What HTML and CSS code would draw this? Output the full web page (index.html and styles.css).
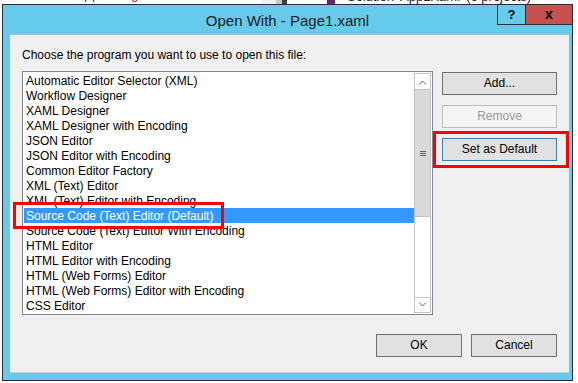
FILE: index.html
```html
<!DOCTYPE html>
<html>
<head>
<meta charset="utf-8">
<link rel="stylesheet" href="styles.css">
</head>
<body>
<div class="bg-strip">
  <span class="bg-code"><span class="r">x:Class="App1.Page1"</span> <span class="b">mc:d</span></span>
  <span class="bg-scroll"><span class="g1"></span><span class="g2"></span><span class="g3"></span></span>
  <span class="bg-icon"></span>
  <span class="bg-sol">Solution 'App1Xaml' (6 projects)</span>
</div>
<div class="window">
  <div class="titlebar">
    <div class="title">Open With - Page1.xaml</div>
    <div class="cap-btn help">?</div>
    <div class="cap-btn close">x</div>
  </div>
  <div class="client">
    <div class="label">Choose the program you want to use to open this file:</div>
    <div class="main">
      <div class="listbox">
        <ul class="items">
          <li class="item">Automatic Editor Selector (XML)</li>
          <li class="item">Workflow Designer</li>
          <li class="item">XAML Designer</li>
          <li class="item">XAML Designer with Encoding</li>
          <li class="item">JSON Editor</li>
          <li class="item">JSON Editor with Encoding</li>
          <li class="item">Common Editor Factory</li>
          <li class="item">XML (Text) Editor</li>
          <li class="item">XML (Text) Editor with Encoding</li>
          <li class="item selected">Source Code (Text) Editor (Default)</li>
          <li class="item">Source Code (Text) Editor With Encoding</li>
          <li class="item">HTML Editor</li>
          <li class="item">HTML Editor with Encoding</li>
          <li class="item">HTML (Web Forms) Editor</li>
          <li class="item">HTML (Web Forms) Editor with Encoding</li>
          <li class="item">CSS Editor</li>
        </ul>
        <div class="scrollbar">
          <div class="sb-btn sb-up">
            <svg width="15" height="15" viewBox="0 0 15 15"><polyline points="4,10.5 7.5,7 11,10.5" fill="none" stroke="#606060" stroke-width="1"/></svg>
          </div>
          <div class="sb-thumb">
            <span class="grip"></span><span class="grip"></span><span class="grip"></span>
          </div>
          <div class="sb-track"></div>
          <div class="sb-btn sb-down">
            <svg width="15" height="14" viewBox="0 0 15 14"><polyline points="4,4.5 7.5,8 11,4.5" fill="none" stroke="#606060" stroke-width="1"/></svg>
          </div>
        </div>
      </div>
      <div class="side">
        <div class="btn btn-dark">Add...</div>
        <div class="btn btn-disabled">Remove</div>
        <div class="btn btn-default">Set as Default</div>
      </div>
    </div>
    <div class="footer">
      <div class="btn btn-dark btn-small">OK</div>
      <div class="btn btn-dark btn-small">Cancel</div>
    </div>
  </div>
  <div class="mark mark-item"></div>
  <div class="mark mark-default"></div>
</div>
</body>
</html>
```
FILE: styles.css
```css
* { box-sizing: border-box; }
html, body { margin: 0; padding: 0; }
body {
  width: 578px;
  height: 383px;
  overflow: hidden;
  background: #ffffff;
  font-family: "Liberation Sans", Arial, sans-serif;
  font-size: 12px;
  color: #000;
}

/* background editor peeking above the dialog */
.bg-strip {
  height: 4px;
  overflow: hidden;
  display: flex;
  white-space: nowrap;
}
.bg-code {
  width: 262px;
  padding-left: 6px;
  font-family: "Liberation Mono", monospace;
  font-size: 13px;
  line-height: 13px;
  margin-top: -11px;
}
.bg-code .r { color: #a31515; }
.bg-code .b { color: #0000ff; }
.bg-scroll { display: flex; width: 65px; }
.bg-scroll .g1 { width: 14px; background: #f0f0f0; }
.bg-scroll .g2 { width: 6px; background: #c8c8d0; }
.bg-scroll .g3 { width: 5px; background: #3e3e52; }
.bg-icon { width: 8px; margin-right: 12px; background: #68217a; }
.bg-sol {
  font-family: "Liberation Sans", sans-serif;
  font-size: 13px;
  line-height: 13px;
  margin-top: -10px;
  color: #1e1e1e;
}

/* dialog window */
.window {
  position: relative;
  margin-left: 2px;
  width: 571px;
  height: 377px;
  border: 1px solid #2d2d30;
  background: #66cbea;
  display: flex;
  flex-direction: column;
}
.titlebar {
  flex: none;
  height: 29px;
  display: flex;
  align-items: flex-start;
}
.title {
  flex: 1;
  text-align: center;
  padding-left: 75px;
  padding-top: 2px;
  font-size: 15px;
  line-height: 27px;
  color: #1a1a1a;
  white-space: nowrap;
}
.cap-btn {
  height: 20px;
  display: flex;
  align-items: center;
  justify-content: center;
  font-weight: bold;
  color: #000;
  border-bottom: 1px solid #2d2d30;
}
.help {
  width: 29px;
  border-left: 1px solid #2d2d30;
  border-right: 1px solid #2d2d30;
  font-size: 13px;
}
.close {
  width: 46px;
  background: #c75050;
  font-size: 14px;
  padding-bottom: 2px;
}

.client {
  flex: 1;
  margin: 0 3px 7px 7px;
  background: #f0f0f0;
  border-top: 1px solid #a9c6d6;
  border-bottom: 1px solid #c9d6dc;
  padding: 13px 12px 0 12px;
  display: flex;
  flex-direction: column;
}
.label {
  height: 15px;
  line-height: 15px;
  white-space: nowrap;
}
.main {
  display: flex;
  align-items: flex-start;
  margin-top: 8px;
}
.listbox {
  width: 411px;
  height: 244px;
  border: 1px solid #828790;
  background: #fff;
  padding: 1px;
  display: flex;
}
.items {
  flex: 1;
  margin: 0;
  padding: 0;
  list-style: none;
}
.item {
  height: 15px;
  padding: 1px 0 0 2px;
  line-height: 14px;
  white-space: nowrap;
}
.item.selected {
  background: #3399ff;
  color: #fff;
}
.scrollbar {
  width: 17px;
  border: 1px solid #c2c2c2;
  display: flex;
  flex-direction: column;
  background: #fff;
}
.sb-btn { display: flex; }
.sb-btn svg { display: block; }
.sb-up { height: 16px; border-bottom: 1px solid #c2c2c2; }
.sb-thumb {
  height: 127px;
  background: #dadada;
  border-bottom: 1px solid #c2c2c2;
  display: flex;
  flex-direction: column;
  align-items: center;
  justify-content: center;
  gap: 1px;
  padding-left: 1px;
}
.grip {
  display: block;
  width: 6px;
  height: 1px;
  background: #606060;
}
.sb-track { flex: 1; }
.sb-down { height: 15px; border-top: 1px solid #c2c2c2; }

.side {
  width: 115px;
  margin-left: 9px;
  margin-top: 1px;
  display: flex;
  flex-direction: column;
}
.btn {
  height: 23px;
  border: 1px solid #adadad;
  background: #e1e1e1;
  line-height: 21px;
  text-align: center;
  white-space: nowrap;
}
.side .btn + .btn { margin-top: 10px; }
.side .btn-default { margin-top: 11px; }
.btn-dark { border-color: #707070; }
.btn-disabled {
  border-color: #bfbfbf;
  background: #f4f4f4;
  color: #9a9a9a;
}
.btn-default { border-color: #3c7fb1; }

.footer {
  display: flex;
  justify-content: flex-end;
  gap: 9px;
  margin-top: 19px;
}
.btn-small { width: 86px; }

/* red annotation frames laid over the dialog */
.mark {
  position: absolute;
  border: 3px solid #ff0000;
}
.mark-item { left: 10px; top: 197px; width: 211px; height: 27px; }
.mark-default { left: 430px; top: 126px; width: 136px; height: 37px; }
```
